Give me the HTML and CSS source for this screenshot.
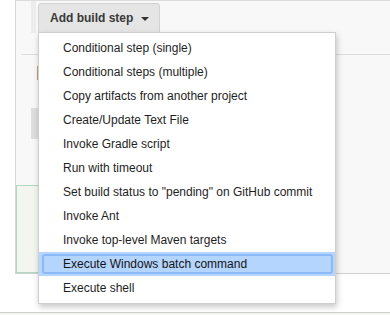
FILE: index.html
```html
<!DOCTYPE html>
<html lang="en">

<head>
    <meta charset="UTF-8">
    <meta name="viewport" content="width=device-width, initial-scale=1.0">
    <title>Build steps</title>
    <link rel="stylesheet" href="styles.css">
</head>

<body>
    <div class="page">
        <div class="section">
            <div class="toolbar">
                <div class="grip"></div>
                <button class="add-step">Add build step <span class="caret"></span></button>
            </div>
            <div class="step-body">
                <div class="field-mark"></div>
                <div class="field-block"></div>
            </div>
            <div class="step-panel"></div>
        </div>
        <div class="gap"></div>
        <div class="footer"></div>

        <!-- dropdown opened from "Add build step" -->
        <ul class="menu">
            <li>Conditional step (single)</li>
            <li>Conditional steps (multiple)</li>
            <li>Copy artifacts from another project</li>
            <li>Create/Update Text File</li>
            <li>Invoke Gradle script</li>
            <li>Run with timeout</li>
            <li>Set build status to "pending" on GitHub commit</li>
            <li>Invoke Ant</li>
            <li>Invoke top-level Maven targets</li>
            <li class="active">Execute Windows batch command</li>
            <li>Execute shell</li>
        </ul>
    </div>
</body>

</html>
```

FILE: styles.css
```css
body {
    margin: 0;
    font-family: "Liberation Sans", Arial, sans-serif;
    background-color: #ffffff;
}

.page {
    position: relative;
    height: 315px;
    overflow: hidden;
    display: flex;
    flex-direction: column;
}

.section {
    margin-left: 15px;
    padding-left: 5px;
    border-left: 1px solid #d6d6d6;
    border-top: 1px solid #dcdcdc;
    border-bottom: 1px solid #d0d0d0;
    background-color: #f8f8f8;
}

.toolbar {
    display: flex;
    align-items: flex-start;
    height: 53px;
    border-bottom: 1px solid #dcdcdc;
}

.grip {
    width: 5px;
    height: 32px;
    margin-left: 10px;
    background-color: #ececec;
}

.add-step {
    display: flex;
    align-items: center;
    height: 30px;
    margin-top: 2px;
    margin-left: 2px;
    padding: 0 10px 0 11px;
    font-family: "Liberation Sans", Arial, sans-serif;
    font-size: 12px;
    font-weight: bold;
    color: #3a3a3a;
    background-color: #e5e5e5;
    border: 1px solid #d2d2d2;
    border-radius: 3px 3px 0 0;
}

.caret {
    width: 0;
    height: 0;
    margin-left: 8px;
    margin-top: 1px;
    border-top: 4px solid #333333;
    border-left: 4px solid transparent;
    border-right: 4px solid transparent;
}

.step-body {
    position: relative;
    height: 119px;
}

.field-mark {
    margin-top: 11px;
    margin-left: 16px;
    width: 2px;
    height: 14px;
    background-color: #b9a47f;
}

.field-block {
    margin-top: 28px;
    margin-left: 10px;
    width: 60px;
    height: 31px;
    background-color: #dedede;
}

.step-panel {
    margin-left: -5px;
    margin-right: 80px;
    height: 86px;
    background-color: #f3f5ef;
    border: 1px solid #b2d8c2;
    border-right: none;
}

.gap {
    height: 38px;
}

.footer {
    flex: 1;
    border-top: 1px solid #d0d0d0;
    background-color: #f4f6f1;
}

.menu {
    position: absolute;
    top: 32px;
    left: 38px;
    width: 296px;
    margin: 0;
    padding: 3px 0 3px;
    list-style: none;
    background-color: #ffffff;
    border: 1px solid #cfcfcf;
    box-shadow: 1px 3px 6px rgba(0, 0, 0, 0.22);
}

.menu li {
    position: relative;
    height: 24px;
    line-height: 24px;
    padding-left: 24px;
    font-size: 12px;
    color: #1e1e1e;
    white-space: nowrap;
}

.menu li.active {
    background-color: #b4d5fe;
    color: #141414;
}

.menu li.active::after {
    content: "";
    position: absolute;
    top: 2px;
    bottom: 2px;
    left: 3px;
    right: 2px;
    border: 2px solid #8cb8f6;
    border-radius: 3px;
}
```
